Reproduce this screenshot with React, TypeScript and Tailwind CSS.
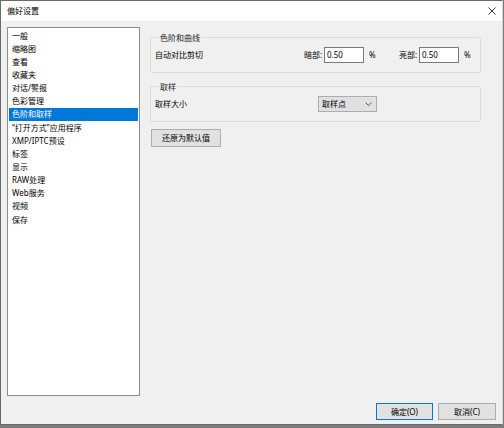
import React from 'react'

const font = { fontFamily: '"Noto Sans", "Noto Sans CJK SC", sans-serif' }

const items = [
  '一般',
  '缩略图',
  '查看',
  '收藏夹',
  '对话/警报',
  '色彩管理',
  '色阶和取样',
  '“打开方式”应用程序',
  'XMP/IPTC预设',
  '标签',
  '显示',
  'RAW处理',
  'Web服务',
  '视频',
  '保存',
]

function Group({ title, children }: { title: string; children: React.ReactNode }) {
  return (
    <fieldset className="border border-[#dcdcdc] rounded-[2px] pl-[4px] pr-[4px] pt-[4px] pb-[9px]">
      <legend className="ml-[4px] px-[1px] text-[8px] leading-[11px] text-[#1a1a1a]">{title}</legend>
      {children}
    </fieldset>
  )
}

function NumInput({ value }: { value: string }) {
  return (
    <div className="w-[40px] h-[16px] bg-white border border-[#7a7a7a] flex items-center pl-[2px] text-[8px] text-black">
      {value}
    </div>
  )
}

export default function App() {
  return (
    <div className="w-[504px] h-[428px] bg-[#7c7c7c] select-none" style={font}>
      <div className="w-[503px] h-[425px] border border-[#6a6a6a] border-r-[#d8d8d8] flex flex-col bg-[#f0f0f0]">
        {/* title bar */}
        <div className="h-[20px] bg-white flex items-center justify-between pl-[6px] pr-[6px] shrink-0">
          <span className="text-[8px] leading-none text-black">偏好设置</span>
          <svg width="8" height="8" viewBox="0 0 8 8">
            <path d="M0.5 0.5 L7.5 7.5 M7.5 0.5 L0.5 7.5" stroke="#222" strokeWidth="0.9" fill="none" />
          </svg>
        </div>

        {/* body */}
        <div className="flex-1 flex flex-col">
          <div className="flex items-start pt-[6px] pl-[6px]">
            {/* category list */}
            <div className="w-[133px] h-[369px] bg-white border border-[#8c8c8c] pt-[1px] shrink-0">
              {items.map((it) => {
                const sel = it === '色阶和取样'
                return (
                  <div
                    key={it}
                    className={`h-[13.15px] mx-[1px] pl-[3px] flex items-center text-[8px] leading-none ${
                      sel ? 'bg-[#0078d7] text-white' : 'text-black'
                    }`}
                  >
                    {it}
                  </div>
                )
              })}
            </div>

            {/* settings panel */}
            <div className="ml-[10px] w-[331px] mt-[5px] flex flex-col">
              <Group title="色阶和曲线">
                <div className="flex items-center text-[8px] text-black">
                  <span className="w-[149px]">自动对比剪切</span>
                  <span className="w-[20px]">暗部:</span>
                  <NumInput value="0.50" />
                  <span className="ml-[5px] w-[30px]">%</span>
                  <span className="w-[20px]">亮部:</span>
                  <NumInput value="0.50" />
                  <span className="ml-[5px]">%</span>
                </div>
              </Group>

              <div className="mt-[8px]">
                <Group title="取样">
                  <div className="flex items-center text-[8px] text-black">
                    <span className="w-[163px]">取样大小</span>
                    <div className="w-[59px] h-[16px] bg-[#e1e1e1] border border-[#adadad] flex items-center justify-between pl-[3px] pr-[4px]">
                      <span>取样点</span>
                      <svg width="7" height="4" viewBox="0 0 7 4">
                        <path d="M0.5 0.5 L3.5 3.5 L6.5 0.5" stroke="#333" strokeWidth="0.8" fill="none" />
                      </svg>
                    </div>
                  </div>
                </Group>
              </div>

              <div className="mt-[7px] ml-[1px]">
                <button className="w-[70px] h-[18px] bg-[#e1e1e1] border border-[#adadad] text-[8px] text-black flex items-center justify-center">
                  还原为默认值
                </button>
              </div>
            </div>
          </div>

          {/* footer */}
          <div className="flex justify-end gap-[5px] pr-[6px] mt-[7px]">
            <button className="w-[57px] h-[17px] bg-[#e1e1e1] border border-[#0078d7] text-[8px] text-black flex items-center justify-center">
              确定(O)
            </button>
            <button className="w-[58px] h-[17px] bg-[#e1e1e1] border border-[#adadad] text-[8px] text-black flex items-center justify-center">
              取消(C)
            </button>
          </div>
        </div>
      </div>
    </div>
  )
}
